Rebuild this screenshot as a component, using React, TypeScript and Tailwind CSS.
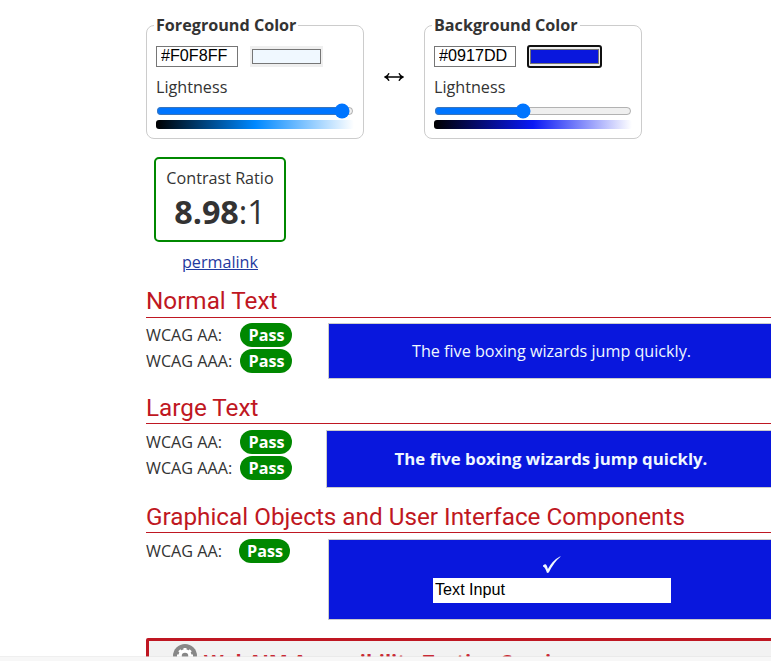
import React from "react";

const sans = "font-['Open_Sans','Noto_Sans',sans-serif]";
const arial = "font-['Liberation_Sans',Arial,sans-serif]";

type PanelProps = {
  title: string;
  hex: string;
  swatch: string;
  focused?: boolean;
  lightness: number;
  gradient: string;
};

function ColorPanel({ title, hex, swatch, focused, lightness, gradient }: PanelProps) {
  return (
    <fieldset className="h-[125px] w-[218px] min-w-0 rounded-lg border border-[#cccccc] px-[7px]">
      <legend className="h-[22px] px-0.5 font-bold leading-[22px]">{title}</legend>
      <div className="ml-0.5 mt-[10px] flex h-[21px] items-center">
        <input
          type="text"
          defaultValue={hex}
          aria-label={title}
          className={`h-[21px] w-[82px] border border-[#767676] bg-white pb-[2px] pl-[4px] pr-0.5 text-[16.16px] leading-[17px] text-black ${arial}`}
        />
        <div
          className={`ml-3 h-[21px] w-[73px] bg-[#efefef] px-0.5 py-[3px] ${
            focused ? "rounded-[2px] outline-2 -outline-offset-1 outline-[#101010]" : ""
          }`}
        >
          <div className={`h-[15px] border border-[#767676] ${swatch}`} />
        </div>
      </div>
      <div className="ml-0.5 mt-[9px] h-[22px] leading-[22px]">Lightness</div>
      <input
        type="range"
        min={0}
        max={100}
        step={0.1}
        defaultValue={lightness}
        aria-label="Lightness"
        className="ml-0.5 mt-[5px] block h-4 w-[198px]"
      />
      <div className={`ml-0.5 mt-[1px] h-[9px] w-[198px] rounded-[3px] ${gradient}`} />
    </fieldset>
  );
}

function Heading({ children, low }: { children: React.ReactNode; low?: boolean }) {
  return (
    <h2
      className={`h-[34px] w-[640px] border-b border-[#bf1722] font-[Roboto,sans-serif] text-[24.28px] text-[#bf1722] ${
        low ? "leading-[36px]" : "leading-[34px]"
      }`}
    >
      {children}
    </h2>
  );
}

function Result({ label, narrow }: { label: string; narrow?: boolean }) {
  return (
    <div className="flex h-[26px] items-center">
      <span className={narrow ? "w-[93px]" : "w-[94px]"}>{label}</span>
      <span
        className={`flex h-6 items-center justify-center rounded-full bg-[#008800] font-bold text-white ${
          narrow ? "w-[51px] pl-px" : "w-[52px] pl-px"
        }`}
      >
        Pass
      </span>
    </div>
  );
}

export default function App() {
  return (
    <div className={`relative flex h-[661px] w-full flex-col overflow-hidden bg-white pl-[146px] text-[16.16px] text-[#333333] ${sans}`}>
      <div className="mt-[14px] flex h-[125px] shrink-0">
        <ColorPanel
          title="Foreground Color"
          hex="#F0F8FF"
          swatch="bg-[#f0f8ff]"
          lightness={97.8}
          gradient="bg-[linear-gradient(to_right,#000000,#0088ff,#ffffff)]"
        />
        <div className="flex w-[60px] items-center justify-center pt-[1px]">
          <svg width="20" height="12" viewBox="0 0 20 12" fill="none" stroke="black" strokeWidth="1.4">
            <path d="M1.5 6H18.5M5 2.2Q4 4.8 1.2 6Q4 7.2 5 9.8M15 2.2Q16 4.8 18.8 6Q16 7.2 15 9.8" />
          </svg>
        </div>
        <ColorPanel
          title="Background Color"
          hex="#0917DD"
          swatch="bg-[#0917dd]"
          focused
          lightness={44.5}
          gradient="bg-[linear-gradient(to_right,#000000,#0a19f5,#ffffff)]"
        />
      </div>

      <div className="ml-2 mt-[18px] flex h-[85px] w-[132px] shrink-0 flex-col items-center rounded-[5px] border-2 border-[#008800]">
        <div className="mt-2 h-[22px] leading-[22px]">Contrast Ratio</div>
        <div className="h-[44px] text-[32.32px] leading-[44px]">
          <b>8.98</b>:1
        </div>
      </div>
      <div className="ml-2 mt-[9px] h-[22px] w-[132px] shrink-0 text-center leading-[22px]">
        <a className="text-[#1f3a9f] underline">permalink</a>
      </div>

      <section className="mt-[11px] h-[106px] shrink-0">
        <Heading>Normal Text</Heading>
        <div className="flex">
          <div className="w-[182px] shrink-0 pt-1">
            <Result label="WCAG AA:" />
            <Result label="WCAG AAA:" />
          </div>
          <div className="mt-[5px] flex h-[56px] w-[447px] shrink-0 items-center justify-center border border-[#cccccc] bg-[#0917dd] text-[#f0f8ff]">
            The five boxing wizards jump quickly.
          </div>
        </div>
      </section>

      <section className="h-[109px] shrink-0">
        <Heading low>Large Text</Heading>
        <div className="flex">
          <div className="w-[180px] shrink-0 pt-[5px]">
            <Result label="WCAG AA:" />
            <Result label="WCAG AAA:" />
          </div>
          <div className="mt-[6px] flex h-[58px] w-[450px] shrink-0 items-center justify-center border border-[#cccccc] bg-[#0917dd] text-[16.8px] font-bold text-[#f0f8ff]">
            The five boxing wizards jump quickly.
          </div>
        </div>
      </section>

      <section className="h-[139px] shrink-0">
        <Heading low>Graphical Objects and User Interface Components</Heading>
        <div className="flex">
          <div className="w-[182px] shrink-0 pt-[5px]">
            <Result label="WCAG AA:" narrow />
          </div>
          <div className="mt-[6px] flex h-[81px] w-[447px] shrink-0 flex-col items-center border border-[#cccccc] bg-[#0917dd]">
            <div className="mt-3 flex h-[26px] items-center text-[#f0f8ff]">
              <svg width="18" height="18" viewBox="0 0 18 18" fill="currentColor">
                <path d="M0 9.5Q1.6 8 3 8.4Q4 9 4.9 13Q9.5 4.5 17.3 0.3L17.5 0.8Q11 6 5.8 16.6L4 17Q2.5 11.5 0 10.4Z" />
              </svg>
            </div>
            <input
              type="text"
              defaultValue="Text Input"
              aria-label="Text Input"
              className={`h-[25px] w-[238px] bg-white pb-[2px] pl-[2.5px] text-[16.16px] text-black ${arial}`}
            />
          </div>
        </div>
      </section>

      <aside className="h-[60px] w-[660px] shrink-0 rounded-tl-[2px] border-[3px] border-[#bf1722] bg-[#f2f2f2]">
        <div className="ml-[24px] mt-[3px] flex">
          <svg width="24" height="24" viewBox="0 0 24 24">
            <circle cx="12" cy="12" r="12" fill="#888888" />
            <circle cx="12" cy="12" r="5" fill="none" stroke="white" strokeWidth="3.5" />
            <path d="M12 4v3M12 17v3M4 12h3M17 12h3M6.3 6.3l2 2M15.7 15.7l2 2M6.3 17.7l2-2M15.7 8.3l2-2" stroke="white" strokeWidth="3" />
          </svg>
          <h3 className="ml-[7px] mt-1 whitespace-nowrap text-[20.2px] font-bold leading-[27px] text-[#c92a35]">
            WebAIM Accessibility Testing Services
          </h3>
        </div>
      </aside>
      <div className="absolute inset-x-0 bottom-0 h-[5px] border-t border-[#e4e4e4]/60 bg-[#f7f7f7] bg-clip-padding" />
    </div>
  );
}
